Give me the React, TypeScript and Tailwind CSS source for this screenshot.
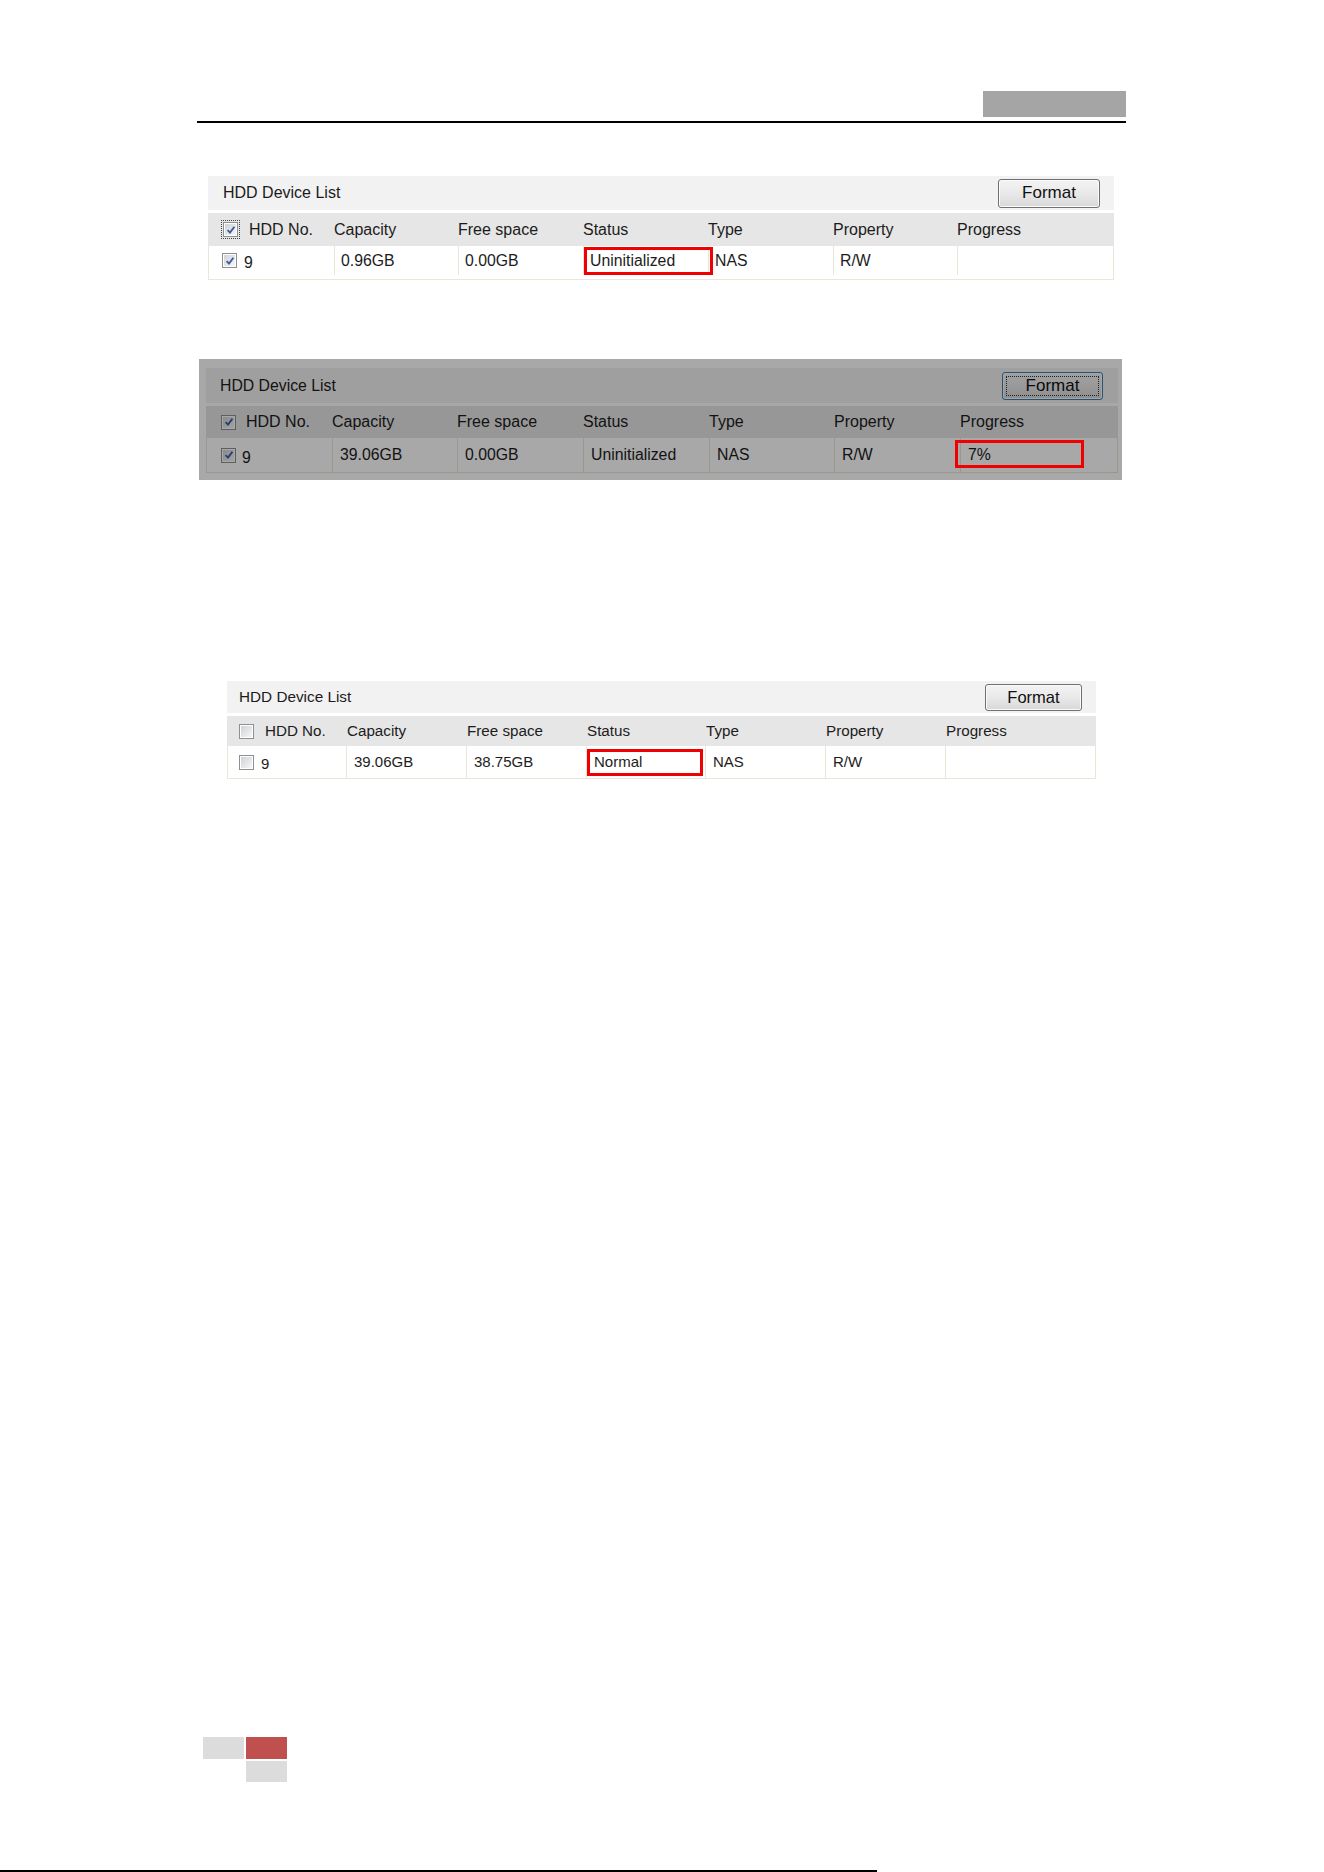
import clsx from "clsx";

type Size = "lg" | "md" | "sm";

interface Disk {
  no: string;
  capacity: string;
  free: string;
  status: string;
  type: string;
  property: string;
  progress: string;
}

const COLUMNS = ["Capacity", "Free space", "Status", "Type", "Property", "Progress"];

// every size of the list written out, so tailwind can pick the classes up
const SIZES = {
  lg: {
    grid: "grid-cols-[125px_124px_125px_125px_125px_124px_1fr]",
    title: "h-[34px] pl-[15px] pr-[14px] text-[16px]",
    head: "h-[33px] text-[16px]",
    headPad: "pl-[1px]",
    row: "h-[34px] text-[15.8px] pb-[4px]",
    rowPad: "pl-[6px]",
    firstHead: "pl-[15px] gap-[11px]",
    firstRow: "pl-[14px] gap-[7px]",
    button: "w-[102px] h-[29px] text-[17px]",
    mark: "top-[1px] left-[0px] w-[129px] h-[28px]",
  },
  md: {
    grid: "grid-cols-[125px_125px_126px_126px_125px_126px_1fr]",
    title: "h-[35px] pl-[14px] pr-[15px] text-[15.8px]",
    head: "h-[32px] text-[16px]",
    headPad: "pl-[1px]",
    row: "h-[35px] text-[15.8px]",
    rowPad: "pl-[7px]",
    firstHead: "pl-[15px] gap-[10px]",
    firstRow: "pl-[15px] gap-[6px]",
    button: "w-[101px] h-[28px] text-[17px]",
    mark: "top-[2px] -left-[6px] w-[129px] h-[28px]",
  },
  sm: {
    grid: "grid-cols-[118px_120px_120px_119px_120px_120px_1fr]",
    title: "h-[32px] pl-[12px] pr-[14px] text-[15.3px]",
    head: "h-[30px] text-[15.2px]",
    headPad: "pl-[2px]",
    row: "h-[33px] text-[15px]",
    rowPad: "pl-[7px]",
    firstHead: "pl-[12px] gap-[11px]",
    firstRow: "pl-[12px] gap-[7px]",
    button: "w-[97px] h-[27px] text-[16.5px]",
    mark: "top-[3px] left-[0px] w-[116px] h-[27px]",
  },
} as const;

function Checkbox({ checked, focused }: { checked: boolean; focused?: boolean }) {
  return (
    <span
      className={clsx(
        "relative flex size-[15px] shrink-0 items-center justify-center border border-[#8e8f8f] bg-white p-[1px]",
        focused && "outline outline-1 outline-offset-[1px] outline-dotted outline-[#444]"
      )}
    >
      <span className="flex size-full items-center justify-center bg-gradient-to-br from-[#cfd2d6] to-[#f7f7f7]">
        {checked && (
          <svg viewBox="0 0 10 10" className="size-[10px]">
            <path
              d="M1.6 5.2 L4 7.6 L8.4 1.8"
              fill="none"
              stroke="#3d5da3"
              strokeWidth="1.9"
            />
          </svg>
        )}
      </span>
    </span>
  );
}

function FormatButton({ size, focused }: { size: Size; focused?: boolean }) {
  return (
    <button
      className={clsx(
        "relative flex items-center justify-center rounded-[3px] border bg-gradient-to-b from-[#f3f3f3] via-[#e9e9e9] to-[#d8d8d8] text-[#111] shadow-[inset_0_0_0_1px_#fbfbfb]",
        focused ? "border-[#3c7fb1] shadow-[inset_0_0_0_1px_#a8d8f3]" : "border-[#707070]",
        SIZES[size].button
      )}
    >
      {focused && (
        <span className="absolute inset-[3px] border border-dotted border-[#333]" />
      )}
      <span className="relative">Format</span>
    </button>
  );
}

interface DeviceListProps {
  size: Size;
  disk: Disk;
  checked: boolean;
  markColumn: number;
  headFocused?: boolean;
  formatFocused?: boolean;
}

function DeviceList({
  size,
  disk,
  checked,
  markColumn,
  headFocused,
  formatFocused,
}: DeviceListProps) {
  const s = SIZES[size];
  const values = [
    disk.capacity,
    disk.free,
    disk.status,
    disk.type,
    disk.property,
    disk.progress,
  ];

  return (
    <div className="relative">
      <div className={clsx("flex items-center justify-between bg-[#f2f2f2]", s.title)}>
        <span>HDD Device List</span>
        <FormatButton size={size} focused={formatFocused} />
      </div>

      <div className={clsx("mt-[3px] grid bg-[#e6e6e6]", s.grid, s.head)}>
        <div className={clsx("flex items-center", s.firstHead)}>
          <Checkbox checked={checked} focused={headFocused} />
          <span>HDD No.</span>
        </div>
        {COLUMNS.map((label) => (
          <div key={label} className={clsx("flex items-center", s.headPad)}>
            {label}
          </div>
        ))}
      </div>

      <div className={clsx("grid border-x border-b border-[#ebe6d8] bg-white", s.grid, s.row)}>
        <div className={clsx("flex items-center -ml-px", s.firstRow)}>
          <Checkbox checked={checked} />
          <span className="mt-[5px]">{disk.no}</span>
        </div>
        {values.map((value, i) => (
          <div
            key={COLUMNS[i]}
            className={clsx("relative flex items-center border-l border-[#ebe6d8]", s.rowPad)}
          >
            {i === markColumn && (
              <span
                className={clsx(
                  "absolute z-20 border-[3px] border-[#f00000]",
                  s.mark
                )}
              />
            )}
            <span className="relative">{value}</span>
          </div>
        ))}
      </div>
    </div>
  );
}

export default function App() {
  return (
    <div className="flex min-h-[1872px] w-[1324px] flex-col bg-white font-['Liberation_Sans',Arial,sans-serif] text-[#1c1c1c]">
      <header className="ml-[197px] mt-[91px] w-[929px]">
        <div className="flex justify-end">
          <div className="h-[26px] w-[143px] bg-[#a5a5a5]" />
        </div>
        <div className="mt-[4px] h-[2px] bg-black" />
      </header>

      <main>
        <section className="ml-[208px] mt-[53px] w-[906px]">
          <DeviceList
            size="lg"
            checked
            headFocused
            markColumn={2}
            disk={{
              no: "9",
              capacity: "0.96GB",
              free: "0.00GB",
              status: "Uninitialized",
              type: "NAS",
              property: "R/W",
              progress: "",
            }}
          />
        </section>

        {/* formatting in progress, page masked */}
        <section className="relative ml-[199px] mt-[79px] w-[923px] bg-white pb-[7px] pl-[7px] pr-[4px] pt-[9px]">
          <DeviceList
            size="md"
            checked
            formatFocused
            markColumn={5}
            disk={{
              no: "9",
              capacity: "39.06GB",
              free: "0.00GB",
              status: "Uninitialized",
              type: "NAS",
              property: "R/W",
              progress: "7%",
            }}
          />
          <div className="absolute inset-0 z-10 bg-black/[0.34]" />
        </section>

        <section className="ml-[227px] mt-[201px] w-[869px]">
          <DeviceList
            size="sm"
            checked={false}
            markColumn={2}
            disk={{
              no: "9",
              capacity: "39.06GB",
              free: "38.75GB",
              status: "Normal",
              type: "NAS",
              property: "R/W",
              progress: "",
            }}
          />
        </section>
      </main>

      <footer className="ml-[203px] mt-[958px] grid w-[84px] grid-cols-[41px_41px] gap-[2px]">
        <div className="h-[22px] bg-[#dcdcdc]" />
        <div className="h-[22px] bg-[#c0504d]" />
        <div />
        <div className="h-[21px] bg-[#dcdcdc]" />
      </footer>

      <div className="mt-auto h-[2px] w-[877px] bg-black" />
    </div>
  );
}
